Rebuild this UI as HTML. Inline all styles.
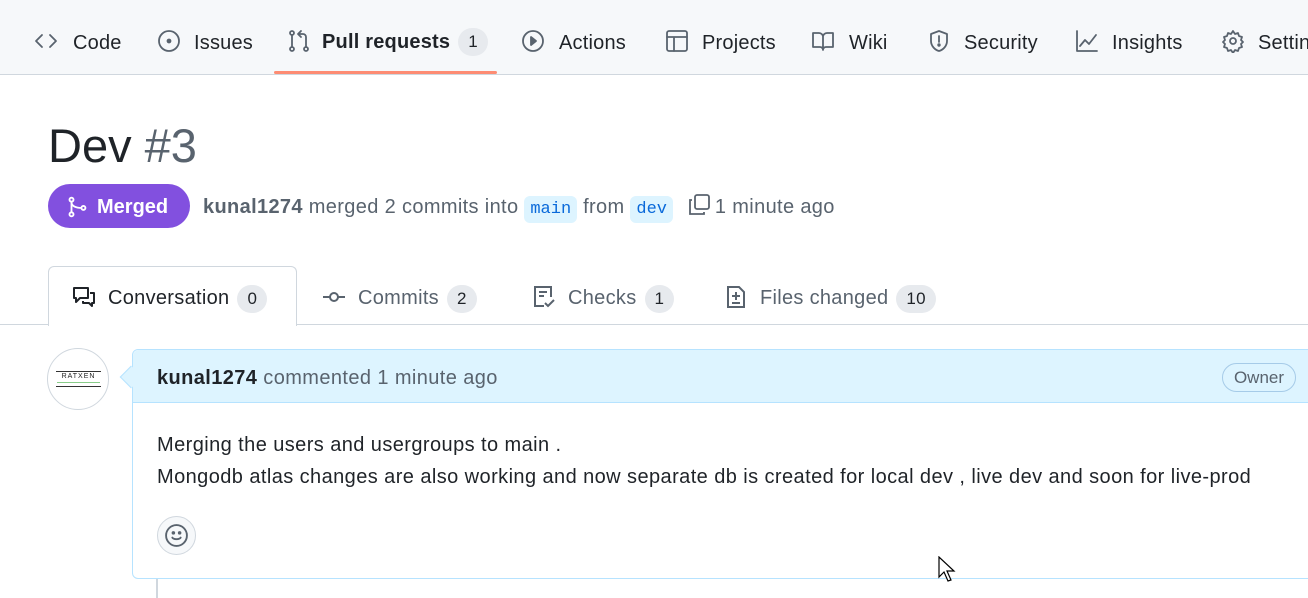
<!DOCTYPE html>
<html><head><meta charset="utf-8"><style>
*{box-sizing:border-box;margin:0;padding:0}
body{width:1308px;height:593px;overflow:hidden;background:#fff;font-family:"Liberation Sans","DejaVu Sans",sans-serif;color:#1f2328;position:relative}
.nav{position:absolute;left:0;top:0;width:1308px;height:75px;background:#f6f8fa;border-bottom:1px solid #d0d7de}
.it{position:absolute;top:30px;font-size:20px;line-height:26px;white-space:nowrap;letter-spacing:0.2px}
.ic{position:absolute;top:29px;width:24px;height:24px;fill:none;stroke:#59636e;stroke-width:1.8;stroke-linecap:round;stroke-linejoin:round}
.cnt{display:inline-block;background:#e7eaee;border-radius:16px;font-size:17px;font-weight:normal;padding:0 10px;line-height:28px;margin-left:8px;vertical-align:1px}
.abs{position:absolute}
.tab{position:absolute;top:284px;font-size:20px;line-height:28px;color:#59636e;white-space:nowrap;letter-spacing:0.3px}
.tab b.c{display:inline-block;background:#e7eaee;border-radius:16px;font-size:17px;color:#1f2328;padding:0 10px;line-height:28px;margin-left:8px;font-weight:normal}
code{font-family:"Liberation Mono",monospace;font-size:17px;color:#0969da;background:#ddf4ff;border-radius:6px;padding:4px 6px;letter-spacing:0}
</style></head><body>
<div class="nav">
<svg class="ic" style="left:34px" viewBox="0 0 24 24"><path d="M8 6l-6 6 6 6M16 6l6 6-6 6"/></svg><div class="it" style="left:73px">Code</div>
<svg class="ic" style="left:157px" viewBox="0 0 24 24"><circle cx="12" cy="12" r="10"/><circle cx="12" cy="12" r="1.5" fill="#59636e"/></svg><div class="it" style="left:194px">Issues</div>
<svg class="ic" style="left:287px" viewBox="0 0 24 24"><circle cx="5" cy="4" r="2"/><circle cx="5" cy="20" r="2"/><circle cx="19" cy="20" r="2"/><path d="M5 6v12M19 18V8a3 3 0 0 0-3-3h-4M14 2l-3 3 3 3"/></svg><div class="it" style="left:322px;top:28px;font-weight:bold">Pull requests<span class="cnt">1</span></div>
<div class="abs" style="left:274px;top:71px;width:223px;height:3px;background:#fd8c73;border-radius:2px"></div>
<svg class="ic" style="left:521px" viewBox="0 0 24 24"><circle cx="12" cy="12" r="10"/><path d="M10 8l5 4-5 4z" fill="#59636e"/></svg><div class="it" style="left:559px">Actions</div>
<svg class="ic" style="left:665px" viewBox="0 0 24 24"><rect x="2" y="2" width="20" height="20" rx="2"/><path d="M2 8h20M9 8v14"/></svg><div class="it" style="left:702px">Projects</div>
<svg class="ic" style="left:811px" viewBox="0 0 24 24"><path d="M2 4h6a4 4 0 0 1 4 4v13a3 3 0 0 0-3-3H2zM22 4h-6a4 4 0 0 0-4 4v13a3 3 0 0 1 3-3h7z"/></svg><div class="it" style="left:849px">Wiki</div>
<svg class="ic" style="left:927px" viewBox="0 0 24 24"><path d="M12 2l8 3v7c0 5-4 9-8 10-4-1-8-5-8-10V5z"/><path d="M12 7v6"/><circle cx="12" cy="16" r=".8" fill="#59636e"/></svg><div class="it" style="left:964px">Security</div>
<svg class="ic" style="left:1075px" viewBox="0 0 24 24"><path d="M2 2v20h20M5 17l5-6 4 4 7-9"/></svg><div class="it" style="left:1112px">Insights</div>
<svg class="ic" style="left:1221px" viewBox="0 0 24 24"><circle cx="12" cy="12" r="3"/><path d="M12 2l2 3 3-1 1 3 3 1-1 3 2 2-2 2 1 3-3 1-1 3-3-1-2 3-2-3-3 1-1-3-3-1 1-3-2-2 2-2-1-3 3-1 1-3 3 1z"/></svg><div class="it" style="left:1258px">Settings</div>
</div>

<div class="abs" style="left:48px;top:118px;font-size:47px;line-height:56px">Dev <span style="color:#59636e;font-weight:300">#3</span></div>

<div class="abs" style="left:48px;top:184px;width:142px;height:44px;background:#8250df;border-radius:22px;color:#fff;font-size:20px;font-weight:bold;line-height:46px;padding-left:49px">Merged</div>
<svg class="abs" style="left:66px;top:196px;width:22px;height:22px;fill:none;stroke:#fff;stroke-width:2" viewBox="0 0 24 24"><circle cx="6" cy="4" r="2.2"/><circle cx="6" cy="20" r="2.2"/><circle cx="19" cy="13" r="2.2"/><path d="M6 6v12M6 7c0 4 5 6 11 6"/></svg>
<div class="abs" style="left:203px;top:193px;font-size:20px;line-height:28px;color:#59636e;white-space:nowrap;letter-spacing:0.35px"><b>kunal1274</b> merged 2 commits into <code>main</code> from <code>dev</code> <svg style="width:24px;height:24px;vertical-align:-4px;margin:0 4px 0 8px;fill:none;stroke:#59636e;stroke-width:1.8" viewBox="0 0 24 24"><rect x="8" y="2" width="14" height="14" rx="2"/><path d="M5 7H3v14h14v-2"/></svg>1 minute ago</div>

<div class="abs" style="left:0;top:324px;width:1308px;height:1px;background:#d0d7de"></div>
<div class="abs" style="left:48px;top:266px;width:249px;height:60px;border:1px solid #d0d7de;border-bottom:none;border-radius:6px 6px 0 0;background:#fff"></div>
<div class="tab" style="left:72px;color:#1f2328"><svg style="width:24px;height:24px;vertical-align:-5px;margin-right:12px;fill:none;stroke:#1f2328;stroke-width:2;stroke-linejoin:round" viewBox="0 0 24 24"><path d="M2 3h14v10H8l-4 4v-4H2zM18 8h4v10h-2v3l-3-3h-6v-2"/></svg>Conversation<b class="c">0</b></div>
<div class="tab" style="left:322px"><svg style="width:24px;height:24px;vertical-align:-5px;margin-right:12px;fill:none;stroke:#59636e;stroke-width:2" viewBox="0 0 24 24"><circle cx="12" cy="12" r="4"/><path d="M1 12h7M16 12h7"/></svg>Commits<b class="c">2</b></div>
<div class="tab" style="left:532px"><svg style="width:24px;height:24px;vertical-align:-5px;margin-right:12px;fill:none;stroke:#59636e;stroke-width:2" viewBox="0 0 24 24"><path d="M12 21H3V2h16v10M7 7h8M7 11h5M13 18l3 3 6-6"/></svg>Checks<b class="c">1</b></div>
<div class="tab" style="left:724px"><svg style="width:24px;height:24px;vertical-align:-5px;margin-right:12px;fill:none;stroke:#59636e;stroke-width:2" viewBox="0 0 24 24"><path d="M4 2h11l5 5v15H4zM12 7v8M8 11h8M8 18h8"/></svg>Files changed<b class="c">10</b></div>

<div class="abs" style="left:47px;top:348px;width:62px;height:62px;border-radius:50%;border:1px solid #d0d7de;background:#fff"></div>
<div class="abs" style="left:56px;top:371px;width:45px;height:16px;border-top:1px solid #333;border-bottom:1px solid #333;font-size:7px;text-align:center;letter-spacing:1px;line-height:10px;color:#222">RATXEN</div>
<div class="abs" style="left:57px;top:382px;width:43px;height:1px;background:#8c8"></div>

<div class="abs" style="left:156px;top:578px;width:2px;height:20px;background:#d0d7de"></div>
<div class="abs" style="left:132px;top:349px;width:1190px;height:230px;border:1px solid #b6e3ff;border-radius:6px;background:#fff"></div>
<div class="abs" style="left:133px;top:350px;width:1180px;height:53px;background:#ddf4ff;border-bottom:1px solid #b6e3ff;border-radius:6px 0 0 0"></div>
<div class="abs" style="left:123px;top:369px;width:16px;height:16px;background:#ddf4ff;border-left:1px solid #b6e3ff;border-bottom:1px solid #b6e3ff;transform:rotate(45deg)"></div>
<div class="abs" style="left:157px;top:364px;font-size:20px;line-height:28px;color:#59636e;white-space:nowrap;letter-spacing:0.4px"><b style="color:#1f2328">kunal1274</b> commented 1 minute ago</div>
<div class="abs" style="left:1222px;top:363px;width:74px;height:29px;border:1px solid #a6cbe8;border-radius:15px;font-size:17px;line-height:27px;text-align:center;color:#59636e">Owner</div>
<div class="abs" style="left:157px;top:429px;font-size:20px;line-height:32px;white-space:nowrap;letter-spacing:0.42px">Merging the users and usergroups to main .<br>Mongodb atlas changes are also working and now separate db is created for local dev , live dev and soon for live-prod</div>
<div class="abs" style="left:157px;top:516px;width:39px;height:39px;border-radius:50%;border:1px solid #d0d7de;background:#f6f8fa"></div>
<svg class="abs" style="left:164px;top:523px;width:25px;height:25px;fill:none;stroke:#59636e;stroke-width:1.8;stroke-linecap:round" viewBox="0 0 24 24"><circle cx="12" cy="12" r="10"/><path d="M8 14c1 2 7 2 8 0"/><circle cx="9" cy="9.5" r=".8" fill="#59636e"/><circle cx="15" cy="9.5" r=".8" fill="#59636e"/></svg>
<svg class="abs" style="left:938px;top:556px;width:20px;height:28px" viewBox="0 0 20 28"><path d="M1 1v20l5-5 4 9 3-1-4-9h7z" fill="#fff" stroke="#000" stroke-width="1.2"/></svg>
</body></html>
